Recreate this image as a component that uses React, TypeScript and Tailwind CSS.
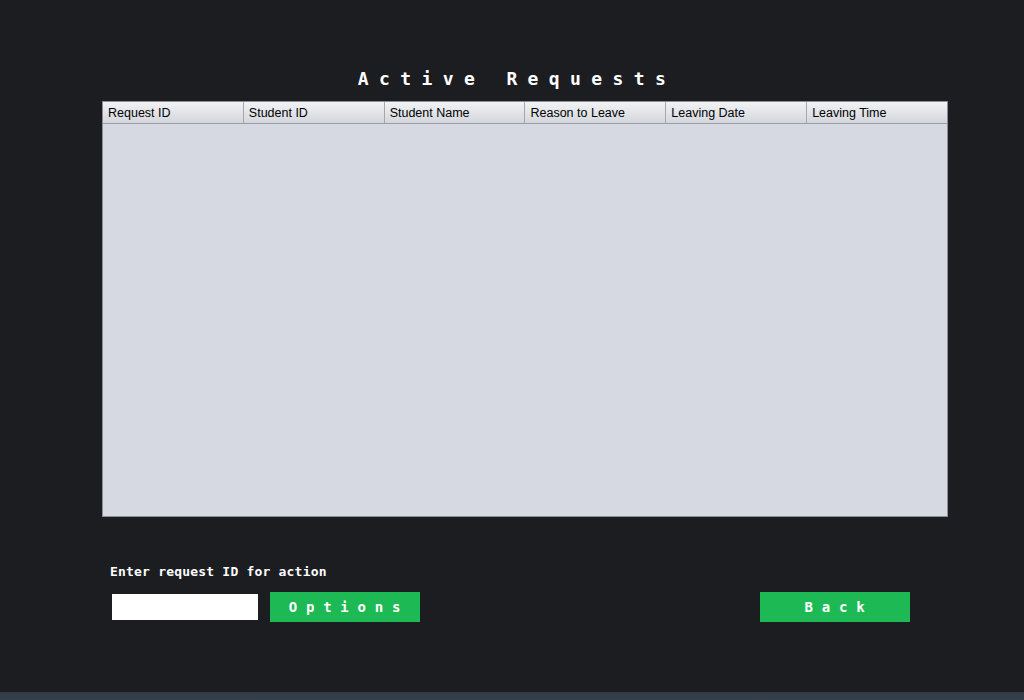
import * as React from "react";

const columns = [
	"Request ID",
	"Student ID",
	"Student Name",
	"Reason to Leave",
	"Leaving Date",
	"Leaving Time",
];

const mono = { fontFamily: '"DejaVu Sans Mono", monospace' };

export default function App() {
	const [requestId, setRequestId] = React.useState("");

	return (
		<div className="flex h-[700px] w-[1024px] flex-col bg-[#1c1d21]">
			<div className="flex flex-1 flex-col">
				{/* Title */}
				<h1
					className="mt-[67px] h-[24px] pl-[10px] text-center text-[18px] font-bold leading-[24px] tracking-[10.4px] text-white"
					style={mono}
				>
					Active Requests
				</h1>

				{/* Table */}
				<div className="ml-[102px] mt-[10px] flex h-[416px] w-[846px] flex-col border border-[#8b8e95] bg-[#d6d9e1]">
					<div className="flex h-[22px] border-b border-[#9a9da4] bg-gradient-to-b from-[#f2f3f5] to-[#d3d6db]">
						{columns.map((col, i) => (
							<div
								key={col}
								className={`flex flex-1 items-center pl-[5px] pt-[1px] text-[12.5px] text-black ${
									i < columns.length - 1 ? "border-r border-[#a4a7ad]" : ""
								}`}
								style={{ fontFamily: '"Liberation Sans", Arial, sans-serif' }}
							>
								{col}
							</div>
						))}
					</div>
					<div className="flex-1" />
				</div>

				{/* Action area */}
				<div className="ml-[110px] mt-[47px] flex flex-col" style={mono}>
					<label className="text-[13px] font-bold leading-[16px] tracking-[0.2px] text-white">
						Enter request ID for action
					</label>
					<div className="mt-[12px] flex items-center">
						<input
							value={requestId}
							onChange={(e) => setRequestId(e.target.value)}
							className="ml-[2px] h-[26px] w-[146px] bg-white px-1 text-[13px] text-black outline-none"
						/>
						<button className="ml-[12px] h-[30px] w-[150px] bg-[#1db954] pl-[8px] text-[14px] font-bold tracking-[8.8px] text-white">
							Options
						</button>
						<button className="ml-[340px] h-[30px] w-[150px] bg-[#1db954] pl-[8px] text-[14px] font-bold tracking-[8.8px] text-white">
							Back
						</button>
					</div>
				</div>
			</div>
			<div className="h-[8px] bg-gradient-to-b from-[#323a44] to-[#36404b]" />
		</div>
	);
}
